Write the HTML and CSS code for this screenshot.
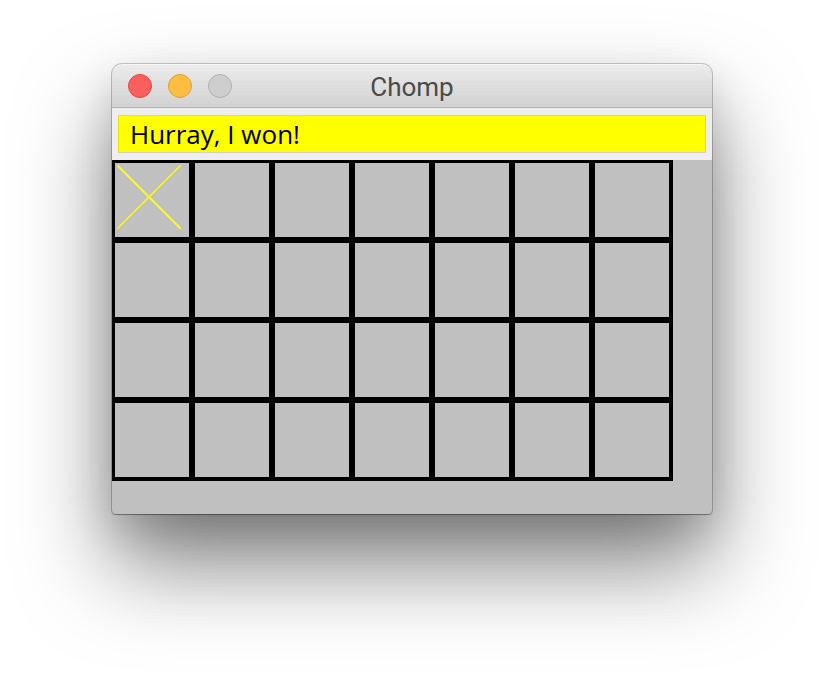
FILE: index.html
```html
<!DOCTYPE html>
<html lang="en">
<head>
<meta charset="utf-8">
<title>Chomp</title>
<link rel="stylesheet" href="styles.css">
</head>
<body>
<main class="window">
  <header class="titlebar">
    <div class="controls">
      <button class="light close" type="button" aria-label="Close"></button>
      <button class="light minimize" type="button" aria-label="Minimize"></button>
      <button class="light zoom" type="button" aria-label="Zoom" disabled></button>
    </div>
    <h1 class="title">Chomp</h1>
  </header>
  <div class="status">
    <input class="message" type="text" aria-label="Game status" value="Hurray, I won!" readonly>
  </div>
  <section class="board" aria-label="Board">
    <div class="grid">
      <button class="cell" type="button" aria-label="Poisoned square"><svg class="cross" viewBox="0 0 66 66" aria-hidden="true"><path d="M1 1L63 63" stroke-width="2"/><path d="M63 1L1 63" stroke-width="1.4"/></svg></button>
      <button class="cell" type="button" aria-label="Row 1, column 2"></button>
      <button class="cell" type="button" aria-label="Row 1, column 3"></button>
      <button class="cell" type="button" aria-label="Row 1, column 4"></button>
      <button class="cell" type="button" aria-label="Row 1, column 5"></button>
      <button class="cell" type="button" aria-label="Row 1, column 6"></button>
      <button class="cell" type="button" aria-label="Row 1, column 7"></button>
      <button class="cell" type="button" aria-label="Row 2, column 1"></button>
      <button class="cell" type="button" aria-label="Row 2, column 2"></button>
      <button class="cell" type="button" aria-label="Row 2, column 3"></button>
      <button class="cell" type="button" aria-label="Row 2, column 4"></button>
      <button class="cell" type="button" aria-label="Row 2, column 5"></button>
      <button class="cell" type="button" aria-label="Row 2, column 6"></button>
      <button class="cell" type="button" aria-label="Row 2, column 7"></button>
      <button class="cell" type="button" aria-label="Row 3, column 1"></button>
      <button class="cell" type="button" aria-label="Row 3, column 2"></button>
      <button class="cell" type="button" aria-label="Row 3, column 3"></button>
      <button class="cell" type="button" aria-label="Row 3, column 4"></button>
      <button class="cell" type="button" aria-label="Row 3, column 5"></button>
      <button class="cell" type="button" aria-label="Row 3, column 6"></button>
      <button class="cell" type="button" aria-label="Row 3, column 7"></button>
      <button class="cell" type="button" aria-label="Row 4, column 1"></button>
      <button class="cell" type="button" aria-label="Row 4, column 2"></button>
      <button class="cell" type="button" aria-label="Row 4, column 3"></button>
      <button class="cell" type="button" aria-label="Row 4, column 4"></button>
      <button class="cell" type="button" aria-label="Row 4, column 5"></button>
      <button class="cell" type="button" aria-label="Row 4, column 6"></button>
      <button class="cell" type="button" aria-label="Row 4, column 7"></button>
    </div>
  </section>
</main>
</body>
</html>
```
FILE: styles.css
```css
* {
  box-sizing: border-box;
}

body {
  margin: 0;
  min-height: 100vh;
  padding: 64px 112px 160px;
  display: flex;
  background: #fff;
}

.window {
  flex: 1;
  display: flex;
  flex-direction: column;
  border-radius: 10px 10px 4px 4px;
  background: #c0c0c0;
  box-shadow: 0 0 0 1px rgba(0, 0, 0, 0.2), 0 1px 1px rgba(0, 0, 0, 0.25), 0 50px 90px rgba(0, 0, 0, 0.5), 0 16px 40px rgba(0, 0, 0, 0.12);
}

.titlebar {
  display: grid;
  grid-template-columns: 1fr auto 1fr;
  align-items: center;
  height: 44px;
  padding: 0 16px;
  border-top: 1px solid #f6f6f6;
  border-bottom: 1px solid #b0b0b0;
  border-radius: 10px 10px 0 0;
  background: linear-gradient(#ebebeb, #d2d2d2);
}

.controls {
  display: flex;
  gap: 16px;
}

.light {
  width: 24px;
  height: 24px;
  padding: 0;
  border: 1px solid;
  border-radius: 50%;
}

.close {
  border-color: #e2443f;
  background: #fd605c;
}

.minimize {
  border-color: #e0a034;
  background: #fdbd40;
}

.zoom {
  border-color: #b0b0b0;
  background: #cecece;
}

.title {
  margin: 0;
  padding-top: 2px;
  color: #4a4a4a;
  font: 400 26px/32px Roboto, "Liberation Sans", sans-serif;
}

.status {
  display: flex;
  padding: 7px 6px;
  background: #eeeeee;
}

.message {
  flex: 1;
  min-width: 0;
  height: 38px;
  padding: 0 11px;
  border: 1px solid #d0d0c8;
  border-left-color: #e4e400;
  border-right-color: #e4e400;
  border-radius: 0;
  outline: 0;
  background: #ffff00;
  color: #000;
  font: 400 26px/36px "Open Sans", "Noto Sans", sans-serif;
}

.board {
  flex: 1;
}

.grid {
  display: grid;
  grid-template-columns: repeat(7, 74px);
  grid-auto-rows: 74px;
  gap: 6px;
  width: max-content;
  padding: 3px 4px 4px 3px;
  background: #000;
}

.cell {
  display: flex;
  align-items: flex-start;
  padding: 2px;
  border: 0;
  background: #c0c0c0;
}

.cross {
  width: 66px;
  height: 66px;
  fill: none;
  stroke: #ffff00;
  stroke-linecap: square;
}
```
